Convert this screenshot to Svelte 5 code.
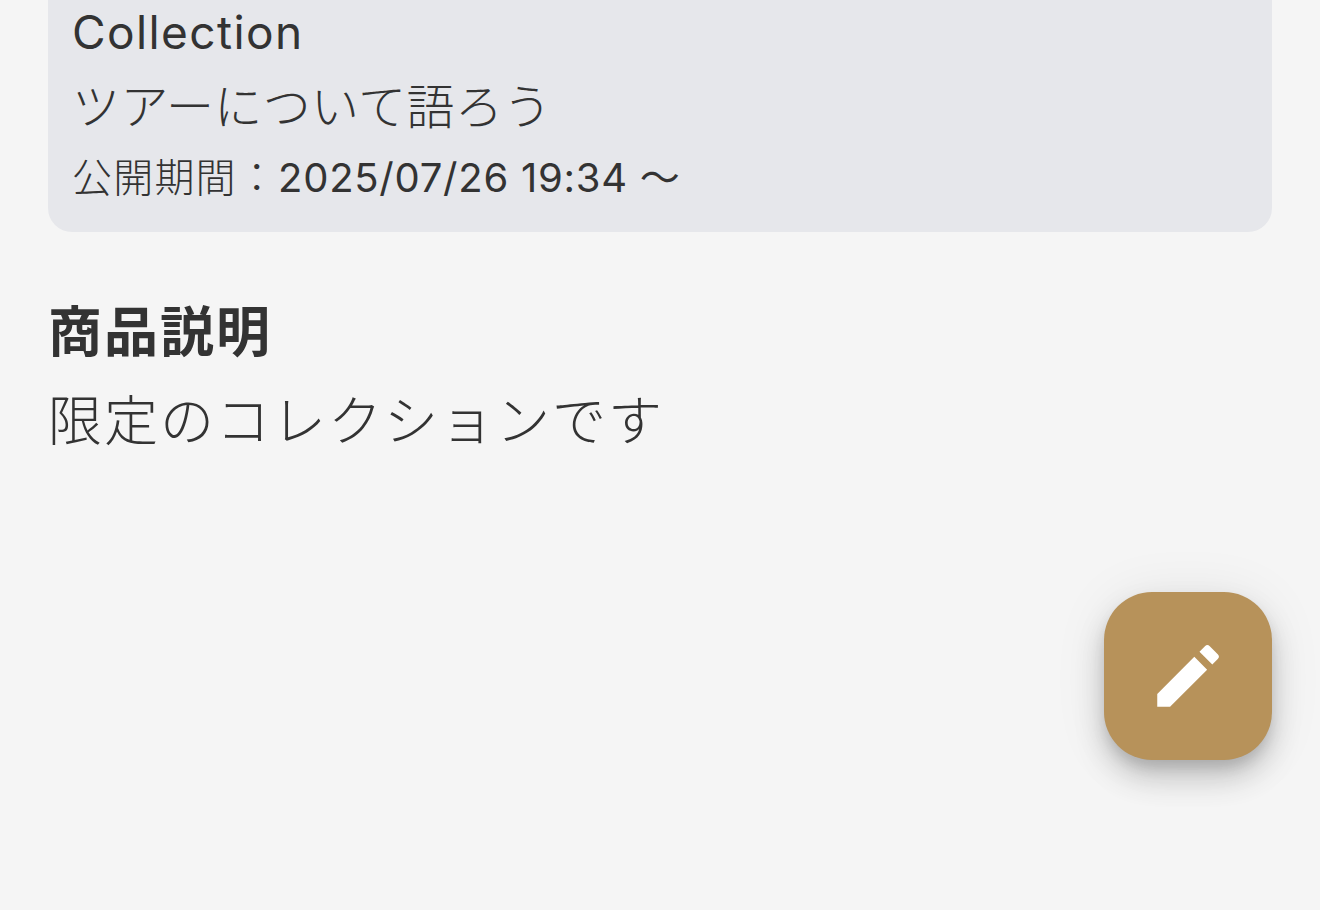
<script>
  const card = { name: 'Collection', title: 'ツアーについて語ろう', label: '公開期間：', period: '2025/07/26 19:34 〜' };
</script>

<main class="page">
  <section class="card">
    <p class="name">{card.name}</p>
    <p class="title">{card.title}</p>
    <p class="period"><span class="label">{card.label}</span>{card.period}</p>
  </section>
  <section class="desc">
    <h2>商品説明</h2>
    <p>限定のコレクションです</p>
  </section>
  <button class="fab" aria-label="編集">
    <svg viewBox="0 0 24 24" width="82" height="82" aria-hidden="true">
      <path fill="#fff" d="M3 17.25V21h3.75L17.6 10.15l-3.75-3.75L3 17.25zM20.71 7.04a1 1 0 0 0 0-1.41l-2.34-2.34a1 1 0 0 0-1.41 0l-1.6 1.6 3.75 3.75 1.6-1.6z"/>
    </svg>
  </button>
</main>

<style>
  :global(body) {
    margin: 0;
    background: #f5f5f5;
  }
  .page {
    position: relative;
    height: 910px;
    overflow: hidden;
    font-family: Inter, "Noto Sans CJK JP", sans-serif;
    color: #333;
  }
  p, h2 { margin: 0; }
  .card {
    margin: 0 48px;
    padding: 0 24px 26px;
    background: #e6e7eb;
    border-radius: 0 0 24px 24px;
  }
  .name {
    font-size: 46px;
    line-height: 64px;
    letter-spacing: 1.4px;
    font-weight: 400;
  }
  .title {
    margin-top: 10px;
    font-size: 48px;
    line-height: 66px;
    letter-spacing: 0.4px;
    font-weight: 300;
  }
  .period {
    margin-top: 10px;
    font-size: 40px;
    line-height: 56px;
    letter-spacing: 0.75px;
    font-weight: 400;
  }
  .label {
    font-size: 40px;
    font-weight: 300;
    letter-spacing: 1.2px;
  }
  .desc { padding: 66px 48px 0; }
  h2 {
    font-size: 54px;
    line-height: 70px;
    font-weight: 700;
    letter-spacing: 2px;
  }
  .desc p {
    margin-top: 16px;
    font-size: 54px;
    line-height: 76px;
    letter-spacing: 2px;
    font-weight: 300;
  }
  .fab {
    position: absolute;
    right: 48px;
    top: 592px;
    width: 168px;
    height: 168px;
    padding: 0;
    border: 0;
    border-radius: 48px;
    background: #b7925a;
    display: grid;
    place-items: center;
    box-shadow: 0 18px 30px rgba(0,0,0,.18), 0 3px 54px rgba(0,0,0,.08), 0 9px 15px -3px rgba(0,0,0,.14);
  }
</style>
